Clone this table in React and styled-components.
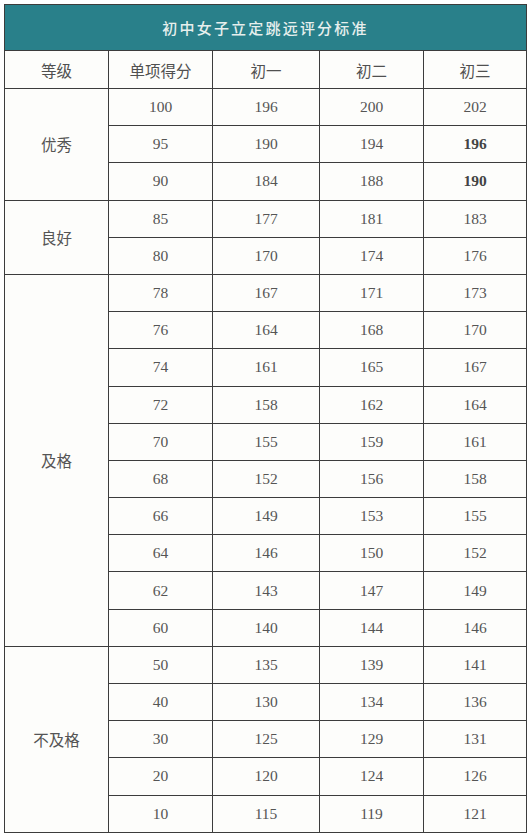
import React from "react";
import styled, { createGlobalStyle } from "styled-components";

const Global = createGlobalStyle`
  html, body { margin: 0; padding: 0; background: #ffffff; }
  body { font-family: "Liberation Serif", "Noto Sans CJK SC", serif; }
`;

const Page = styled.div`
  padding: 4px 4px 0 4px;
  width: 531px;
  box-sizing: border-box;
`;

const Table = styled.table`
  width: 523px;
  border-collapse: collapse;
  table-layout: fixed;
  background: #fdfdfb;
  border: 1.5px solid #3c3c3c;
`;

const TitleCell = styled.th`
  height: 45px;
  padding: 0;
  background: #29808a;
  color: #e6efed;
  font-family: "Noto Sans CJK SC", sans-serif;
  font-weight: 500;
  font-size: 15px;
  letter-spacing: 2.2px;
  text-align: center;
  border: 1.5px solid #3c3c3c;
`;

const HeadCell = styled.th`
  height: 37px;
  padding: 0;
  font-family: "Noto Sans CJK SC", sans-serif;
  font-weight: 400;
  font-size: 15.5px;
  color: #505050;
  text-align: center;
  border: 1.5px solid #3c3c3c;
`;

const Cell = styled.td`
  height: ${(p) => p.$h}px;
  padding: 0;
  font-family: ${(p) =>
    p.$cjk ? `"Noto Sans CJK SC", sans-serif` : `"Liberation Serif", serif`};
  font-size: 15.5px;
  font-weight: ${(p) => (p.$bold ? 700 : 400)};
  color: ${(p) => (p.$bold ? "#444444" : "#555555")};
  text-align: center;
  vertical-align: middle;
  border: 1.5px solid #3c3c3c;
`;

const groups = [
  {
    name: "优秀",
    rows: [
      ["100", "196", "200", "202"],
      ["95", "190", "194", "196", true],
      ["90", "184", "188", "190", true],
    ],
  },
  {
    name: "良好",
    rows: [
      ["85", "177", "181", "183"],
      ["80", "170", "174", "176"],
    ],
  },
  {
    name: "及格",
    rows: [
      ["78", "167", "171", "173"],
      ["76", "164", "168", "170"],
      ["74", "161", "165", "167"],
      ["72", "158", "162", "164"],
      ["70", "155", "159", "161"],
      ["68", "152", "156", "158"],
      ["66", "149", "153", "155"],
      ["64", "146", "150", "152"],
      ["62", "143", "147", "149"],
      ["60", "140", "144", "146"],
    ],
  },
  {
    name: "不及格",
    rows: [
      ["50", "135", "139", "141"],
      ["40", "130", "134", "136"],
      ["30", "125", "129", "131"],
      ["20", "120", "124", "126"],
      ["10", "115", "119", "121"],
    ],
  },
];

const ROW_H = 36.2;

export default function App() {
  return (
    <Page>
      <Global />
      <Table>
        <colgroup>
          <col style={{ width: "104px" }} />
          <col style={{ width: "104px" }} />
          <col style={{ width: "107px" }} />
          <col style={{ width: "104px" }} />
          <col />
        </colgroup>
        <thead>
          <tr>
            <TitleCell colSpan={5}>初中女子立定跳远评分标准</TitleCell>
          </tr>
          <tr>
            <HeadCell>等级</HeadCell>
            <HeadCell>单项得分</HeadCell>
            <HeadCell>初一</HeadCell>
            <HeadCell>初二</HeadCell>
            <HeadCell>初三</HeadCell>
          </tr>
        </thead>
        <tbody>
          {groups.map((g) =>
            g.rows.map((r, i) => (
              <tr key={g.name + r[0]}>
                {i === 0 && (
                  <Cell $cjk rowSpan={g.rows.length} $h={ROW_H}>
                    {g.name}
                  </Cell>
                )}
                <Cell $h={ROW_H}>{r[0]}</Cell>
                <Cell $h={ROW_H}>{r[1]}</Cell>
                <Cell $h={ROW_H}>{r[2]}</Cell>
                <Cell $h={ROW_H} $bold={r[4]}>
                  {r[3]}
                </Cell>
              </tr>
            ))
          )}
        </tbody>
      </Table>
    </Page>
  );
}
